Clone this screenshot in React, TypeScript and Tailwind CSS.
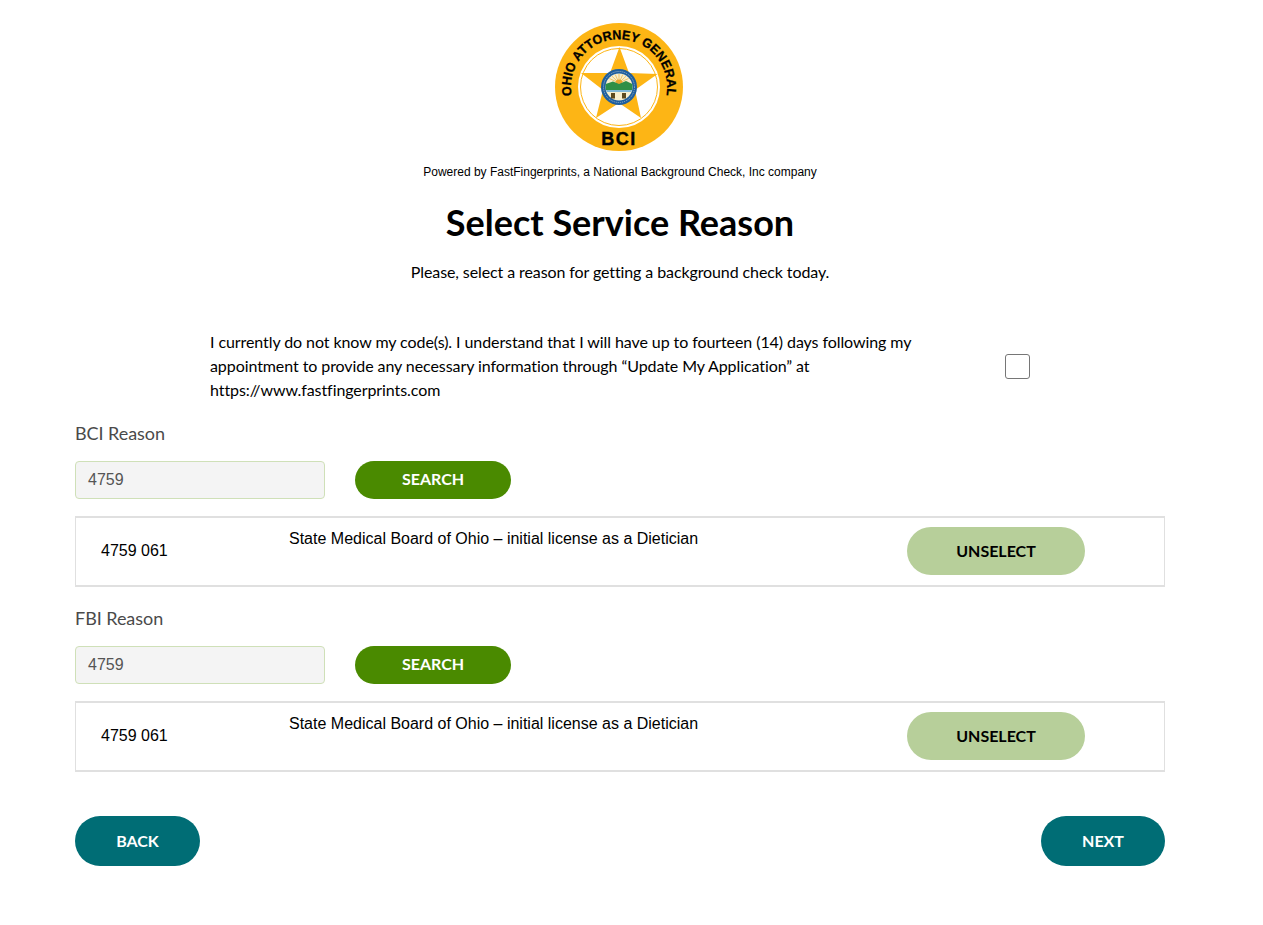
import React from "react";

const sans = "font-['Liberation_Sans',Arial,sans-serif]";
const lato = "font-['Lato','Liberation_Sans',sans-serif]";

function Seal() {
  const star = "64.5,24 74,50 102.5,51 80,67 86,95 64,80 41,95 48,67 26,50 55,50";
  const rays = [-60, -40, -20, 0, 20, 40, 60];
  return (
    <svg width="128" height="128" viewBox="0 0 128 128" className="block mr-[2px]">
      <defs>
        <path id="arcTop" d="M 16.7 72.5 A 48 48 0 1 1 111.3 72.5" />
      </defs>
      <circle cx="64" cy="64" r="64" fill="#fdb515" />
      <circle cx="64" cy="64" r="41" fill="#ffffff" />
      <circle cx="64" cy="64" r="38.5" fill="none" stroke="#fdb515" strokeWidth="1" />
      <polygon points={star} fill="#fdb515" />
      <circle cx="64" cy="64" r="18" fill="#1f5f9e" />
      <circle cx="64" cy="64" r="15.5" fill="none" stroke="#9fb6c9" strokeWidth="1" strokeDasharray="1 1" />
      <circle cx="64" cy="64" r="13.5" fill="#f7efcf" />
      <g stroke="#eeb94a" strokeWidth="0.8">
        {rays.map((a) => (
          <line key={a} x1="64" y1="60" x2={64 + 11 * Math.sin((a * Math.PI) / 180)} y2={60 - 9 * Math.cos((a * Math.PI) / 180)} />
        ))}
      </g>
      <circle cx="64" cy="60" r="3.5" fill="#e9a52c" />
      <path d="M50.6 61 L58 58.5 L64 61 L71 58 L77.4 61 L77.3 67 L50.7 67 Z" fill="#2f8f46" />
      <path d="M51 67 H77 L76 69 H52 Z" fill="#7fb8d8" />
      <path d="M56 70 h4 v5.5 h-4 Z M67 70 h4 v5.5 h-4 Z" fill="#5c4a1e" />
      <text fontFamily="'Liberation Sans',Arial,sans-serif" fontWeight="700" fontSize="13" fill="#000000" stroke="#000000" strokeWidth="0.3">
        <textPath href="#arcTop" textLength="167" lengthAdjust="spacingAndGlyphs">OHIO ATTORNEY GENERAL</textPath>
      </text>
      <text x="64" y="121.5" textAnchor="middle" fontFamily="'Liberation Sans',Arial,sans-serif" fontWeight="700" fontSize="18" letterSpacing="1.5" stroke="#000000" strokeWidth="0.4" fill="#000000">BCI</text>
    </svg>
  );
}

function ReasonBlock({ label }: { label: string }) {
  return (
    <section>
      <h2 className={`${lato} text-[18px] leading-[22px] text-[#4a4a4a] font-normal tracking-[-0.05px]`}>{label}</h2>
      <div className="flex items-center gap-[30px] mt-[17px]">
        <div className={`${sans} w-[250px] h-[38px] box-border flex items-center pl-[12px] rounded-[4px] border border-[#cfe0b8] bg-[#f4f4f4] text-[16px] text-[#555555]`}>
          4759
        </div>
        <button className={`${lato} w-[156px] h-[38px] pb-[2px] rounded-full bg-[#4a8a00] text-white text-[16px] font-bold`}>SEARCH</button>
      </div>
      <div className="mt-[17px] h-[71px] box-border border-y-2 border-x border-[#e0e0e0] flex relative">
        <div className={`${sans} w-[213px] shrink-0 pl-[25px] pt-[23px] text-[16px] leading-[20px] text-black`}>4759 061</div>
        <div className={`${sans} flex-1 pt-[11px] text-[16px] leading-[20px] text-black`}>State Medical Board of Ohio – initial license as a Dietician</div>
        <div className="pr-[79px] pt-[9px]">
          <button className={`${lato} w-[178px] h-[48px] rounded-full bg-[#b7cf9a] text-black text-[16px] font-bold`}>UNSELECT</button>
        </div>
      </div>
    </section>
  );
}

export default function App() {
  return (
    <div className="min-h-[925px] bg-white">
      <main className="w-[1090px] ml-[75px]">
        <div className="pt-[23px] flex flex-col items-center">
          <Seal />
          <p className={`${sans} mt-[12px] text-[12px] leading-[18px] text-black`}>Powered by FastFingerprints, a National Background Check, Inc company</p>
          <h1 className={`${lato} mt-[19px] text-[36px] leading-[44px] font-bold text-black`}>Select Service Reason</h1>
          <p className={`${lato} mt-[16px] text-[16px] leading-[24px] tracking-[-0.1px] text-black`}>Please, select a reason for getting a background check today.</p>
        </div>
        <div className="mt-[46px] flex items-center">
          <p className={`${lato} ml-[135px] w-[720px] text-[16px] leading-[24px] tracking-[-0.08px] text-black`}>
            I currently do not know my code(s). I understand that I will have up to fourteen (14) days following my appointment to provide any necessary information through “Update My Application” at https://www.fastfingerprints.com
          </p>
          <span className="ml-[75px] w-[25px] h-[25px] box-border block rounded-[3px] border border-[#767676] bg-white" />
        </div>
        <div className="mt-[20px]"><ReasonBlock label="BCI Reason" /></div>
        <div className="mt-[20px]"><ReasonBlock label="FBI Reason" /></div>
        <div className="mt-[44px] flex justify-between">
          <button className={`${lato} w-[125px] h-[50px] pb-[1px] rounded-full bg-[#006d75] text-white text-[16px] font-bold`}>BACK</button>
          <button className={`${lato} w-[124px] h-[50px] pb-[1px] rounded-full bg-[#006d75] text-white text-[16px] font-bold`}>NEXT</button>
        </div>
      </main>
    </div>
  );
}
